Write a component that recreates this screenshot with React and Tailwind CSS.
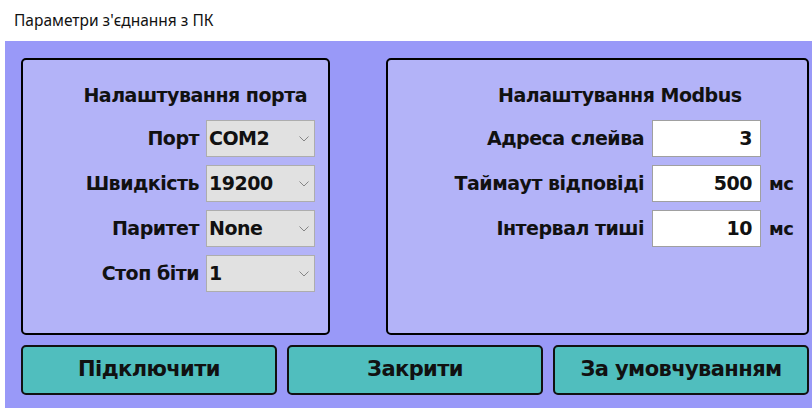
import React from 'react';

// COM-port connection settings dialog
const portRows = [
    { label: 'Порт', value: 'COM2' },
    { label: 'Швидкість', value: '19200' },
    { label: 'Паритет', value: 'None' },
    { label: 'Стоп біти', value: '1' },
];

const modbusRows = [
    { label: 'Адреса слейва', value: '3', unit: '' },
    { label: 'Таймаут відповіді', value: '500', unit: 'мс' },
    { label: 'Інтервал тиші', value: '10', unit: 'мс' },
];

const Chevron = () => (
    <svg width="10" height="6" viewBox="0 0 10 6" className="shrink-0">
        <polyline points="0.5,0.5 5,5 9.5,0.5" fill="none" stroke="#858585" strokeWidth="1" />
    </svg>
);

const Combo = ({ value }) => (
    <div className="w-[109px] h-[37px] bg-[#e1e1e1] border border-[#adadad] flex items-center justify-between pl-[2px] pr-[5px]">
        <span>{value}</span>
        <Chevron />
    </div>
);

const Panel = ({ children, className }) => (
    <div className={`h-[277px] bg-[#b3b3f8] border-2 border-black rounded-[5px] ${className}`}>
        {children}
    </div>
);

const Button = ({ children }) => (
    <button className="w-[256px] h-[50px] bg-[#50bebe] border-2 border-[#111] rounded-[5px] font-bold text-[21px] tracking-[-0.6px]">
        {children}
    </button>
);

export default function App() {
    return (
        <div className="w-[812px] h-[408px] bg-white flex flex-col text-[#111]" style={{ fontFamily: '"DejaVu Sans", sans-serif' }}>
            <div className="h-[41px] flex items-center pl-[14px] text-[15.5px]" style={{ fontFamily: '"Noto Sans", sans-serif' }}>
                Параметри з'єднання з ПК
            </div>

            <div className="flex-1 ml-[5px] bg-[#9999f8] pl-[16px] pr-[3px] pt-[17px] flex flex-col gap-[10px]">
                <div className="flex gap-[56px] font-bold text-[19px] tracking-[-0.5px]">
                    <Panel className="w-[309px] flex flex-col items-end pr-[13px]">
                        <div className="leading-[24px] mt-[23px] mr-[8px] mb-[13px]">Налаштування порта</div>
                        <div className="grid grid-cols-[auto_109px] gap-x-[7px] gap-y-[8px] items-center">
                            {portRows.map((r) => (
                                <React.Fragment key={r.label}>
                                    <span className="text-right">{r.label}</span>
                                    <Combo value={r.value} />
                                </React.Fragment>
                            ))}
                        </div>
                    </Panel>

                    <Panel className="w-[423px] flex justify-end pr-[8px]">
                        <div className="grid grid-cols-[auto_109px_30px] gap-x-[8px] gap-y-[8px] items-center content-start">
                            <div className="col-span-3 text-center leading-[24px] mt-[23px] mb-[5px] pr-[14px]">Налаштування Modbus</div>
                            {modbusRows.map((r) => (
                                <React.Fragment key={r.label}>
                                    <span className="text-right">{r.label}</span>
                                    <div className="h-[37px] bg-white border border-[#a0a0a0] flex items-center justify-end pr-[8px]">{r.value}</div>
                                    <span className="text-[18px]">{r.unit}</span>
                                </React.Fragment>
                            ))}
                        </div>
                    </Panel>
                </div>

                <div className="flex gap-[10px]">
                    <Button>Підключити</Button>
                    <Button>Закрити</Button>
                    <Button>За умовчуванням</Button>
                </div>
            </div>
        </div>
    );
}
